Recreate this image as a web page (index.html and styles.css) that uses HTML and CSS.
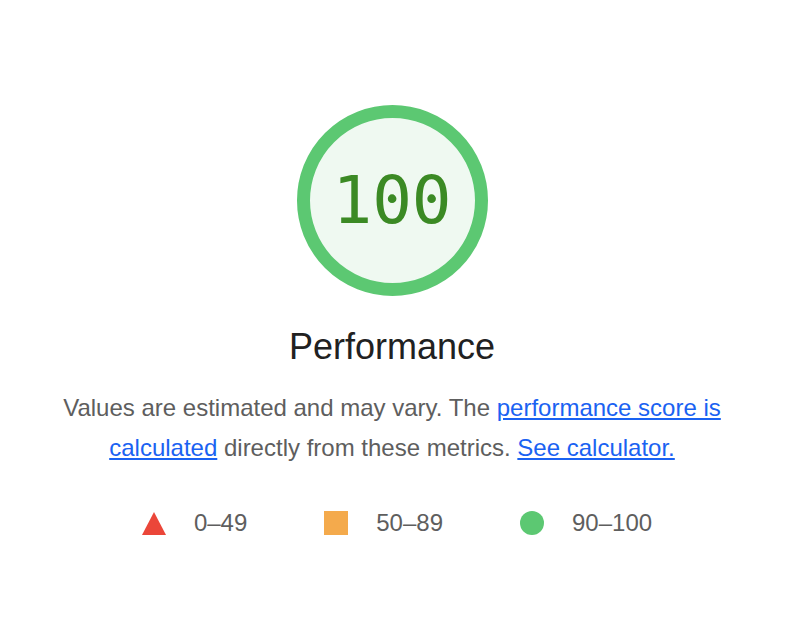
FILE: index.html
```html
<!DOCTYPE html>
<html lang="en">
<head>
  <meta charset="UTF-8" />
  <title>Performance</title>
  <link rel="stylesheet" href="styles.css">
</head>
<body>
  <div class="pagina">
    <div class="medidor">
      <span class="medidor-valor">100</span>
    </div>

    <h1 class="medidor-titulo">Performance</h1>

    <p class="descricao">
      Values are estimated and may vary. The <a href="#">performance score is calculated</a>
      directly from these metrics. <a href="#">See calculator.</a>
    </p>

    <div class="legenda">
      <div class="legenda-item">
        <span class="forma triangulo"></span>
        <span>0–49</span>
      </div>
      <div class="legenda-item">
        <span class="forma quadrado"></span>
        <span>50–89</span>
      </div>
      <div class="legenda-item">
        <span class="forma circulo"></span>
        <span>90–100</span>
      </div>
    </div>
  </div>
</body>
</html>
```
FILE: styles.css
```css
:root {
  --verde: #5cc872;
  --verde-fundo: #eff9f1;
  --verde-texto: #3b8a24;
  --laranja: #f4aa4c;
  --vermelho: #eb4639;
  --cinza-texto: #5e5e5e;
  --preto: #212121;
  --azul-link: #1a62f2;
}
* {
  box-sizing: border-box;
}
body {
  margin: 0;
  background: white;
}
.pagina {
  font-family: 'Liberation Sans', Arial, sans-serif;
  width: 784px;
  padding-top: 105px;
  display: flex;
  flex-direction: column;
  align-items: center;
}
.medidor {
  width: 191px;
  height: 191px;
  border-radius: 50%;
  border: 13px solid var(--verde);
  background-color: var(--verde-fundo);
  display: flex;
  align-items: center;
  justify-content: center;
}
.medidor-valor {
  font-family: 'DejaVu Sans Mono', monospace;
  font-variant-numeric: slashed-zero;
  font-size: 66px;
  color: var(--verde-texto);
  line-height: 1;
}
.medidor-titulo {
  font-size: 36px;
  font-weight: 400;
  color: var(--preto);
  margin: 31px 0 0;
  line-height: 40px;
}
.descricao {
  width: 720px;
  margin: 21px 0 0;
  text-align: center;
  font-size: 24px;
  line-height: 40px;
  color: var(--cinza-texto);
}
.descricao a {
  color: var(--azul-link);
}
.legenda {
  display: flex;
  gap: 77px;
  margin-top: 41px;
  padding-left: 10px;
  font-size: 24px;
  line-height: 28px;
  color: var(--cinza-texto);
}
.legenda-item {
  display: flex;
  align-items: center;
  gap: 28px;
}
.forma {
  width: 24px;
  height: 24px;
}
.triangulo {
  width: 0;
  height: 0;
  border-left: 12px solid transparent;
  border-right: 12px solid transparent;
  border-bottom: 23px solid var(--vermelho);
}
.quadrado {
  background-color: var(--laranja);
}
.circulo {
  border-radius: 50%;
  background-color: var(--verde);
}
```
